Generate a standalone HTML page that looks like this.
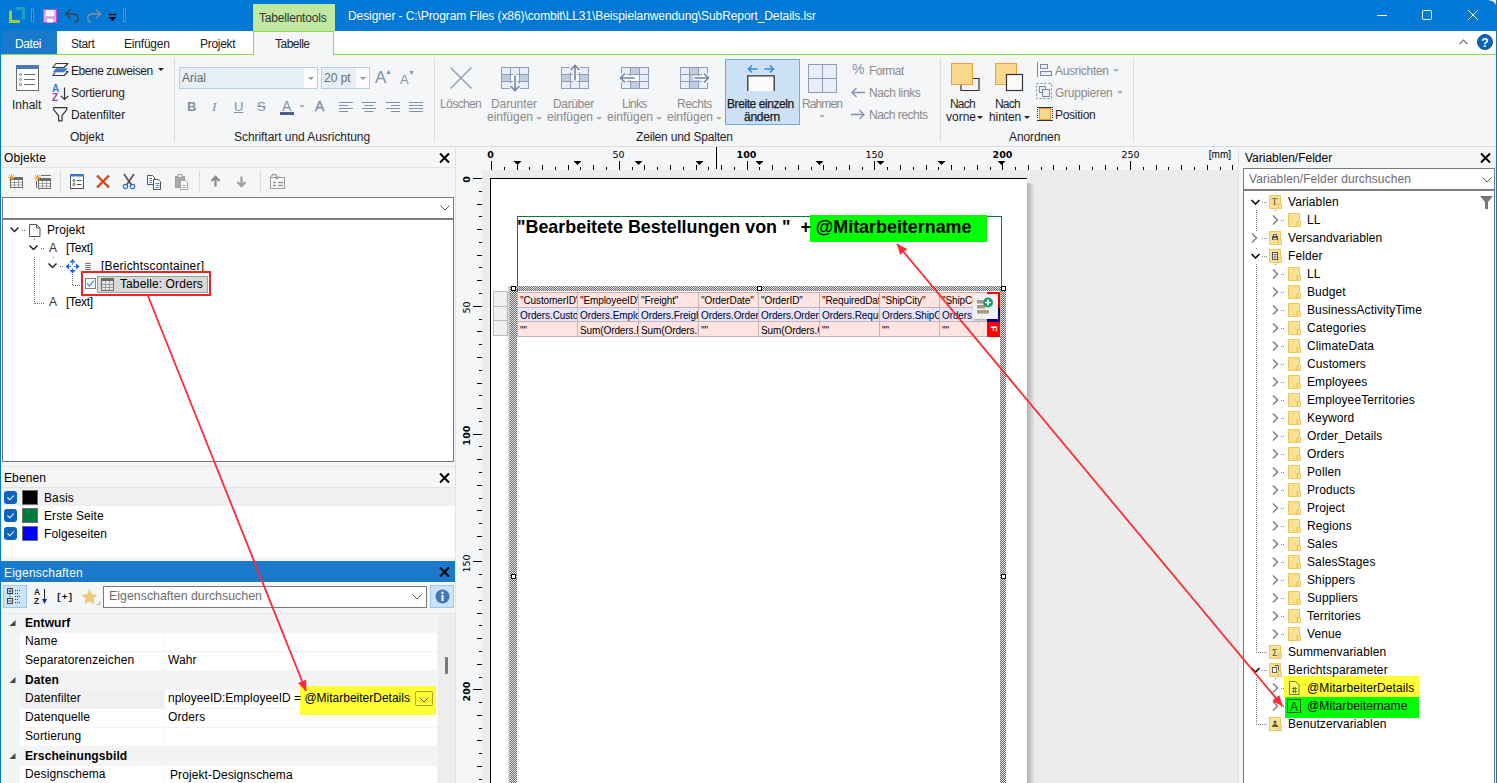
<!DOCTYPE html>
<html lang="de">
<head>
<meta charset="utf-8">
<title>Designer</title>
<style>
*{box-sizing:border-box;margin:0;padding:0}
html,body{width:1497px;height:783px;overflow:hidden;background:#f5f6f7}
body{position:relative;font-family:"Liberation Sans",sans-serif;font-size:12px;color:#000}
.abs,.abs>*{position:absolute}
.t{position:absolute;white-space:nowrap;line-height:1}
.ui{font-family:"Liberation Sans",sans-serif;font-size:12px;color:#1e1e1e}
.dis{color:#8a8a8a}
svg{position:absolute;overflow:visible}
/* ---------- title ---------- */
#title{left:0;top:0;width:1497px;height:31px;background:#0078d5}
#tabs{left:0;top:31px;width:1497px;height:24px;background:#fff;border-bottom:1px solid #86dc4e}
#ribbon{left:0;top:55px;width:1497px;height:92px;background:#f5f6f7;border-bottom:1px solid #dadbdc}
.dd{border:3px solid transparent;border-top:3px solid #b0b0b0;border-bottom:none;width:0;height:0}
.ddk{border:3px solid transparent;border-top:3px solid #222;border-bottom:none;width:0;height:0}
.pt{position:absolute;white-space:nowrap;line-height:1;font-size:12px;color:#000;letter-spacing:0.1px}
.hl{position:absolute;height:1px;background:#e2e3e5}
.dotv{position:absolute;width:1px;background-image:linear-gradient(#808080 50%,transparent 50%);background-size:1px 2px}
.doth{position:absolute;height:1px;background-image:linear-gradient(90deg,#808080 50%,transparent 50%);background-size:2px 1px}
.cb{position:absolute;width:13px;height:13px;border-radius:3px;background:#0a64c0}
.sw{position:absolute;width:16px;height:15px;border:1px solid #6e6e6e}
.prow{position:absolute;left:20px;width:417px;height:19px;background:#fff;border-bottom:1px solid #f2f3f5}
.pcat{position:absolute;left:25px;font-weight:bold;font-size:12px;white-space:nowrap;line-height:1;letter-spacing:0.1px}
.cell{position:absolute;border:1px solid #c9b2b2;font-size:10px;line-height:15px;padding-left:2px;padding-top:1px;white-space:nowrap;overflow:hidden;letter-spacing:-0.1px}
.vsep{position:absolute;width:1px;background:#dcdde0}
</style>
</head>
<body>
<!-- TITLE BAR -->
<div id="title" class="abs">
  <svg style="left:0;top:0" width="130" height="31" viewBox="0 0 130 31">
    <path d="M15.5 8.500h8v11" fill="none" stroke="#1fa3c4" stroke-width="3"/>
    <path d="M10.500 10.500v11h9.500" fill="none" stroke="#a9c91d" stroke-width="3"/>
    <rect x="31.500" y="9" width="2" height="13" fill="#0a5fb0" stroke="#5ea6e6" stroke-width="0.8"/>
    <rect x="43.500" y="9.500" width="13" height="13" fill="#e6a6e6" stroke="#c44fc4"/>
    <rect x="46" y="10" width="8" height="6" fill="#f6f6f6"/>
    <rect x="47" y="19" width="6" height="3.500" fill="#fff"/>
    <path d="M74.500 22.500c5-1.500 5.500-8.500-1.500-8.500h-7.500M70.500 9.500l-4.700 4.500l4.700 4.500" fill="none" stroke="#444" stroke-width="1.500"/>
    <path d="M91.500 22.500c-5-1.500-5.500-8.500 1.500-8.500h7.500M96 9.500l4.700 4.500l-4.700 4.500" fill="none" stroke="#8c8f94" stroke-width="1.300"/>
    <path d="M108.500 14.500h8" stroke="#000" stroke-width="1.200"/><path d="M108.500 17h8l-4 4z" fill="#000"/>
    <rect x="123.500" y="9" width="2" height="13" fill="#0a5fb0" stroke="#5ea6e6" stroke-width="0.8"/>
  </svg>
  <svg style="left:1370px;top:0" width="127" height="31" viewBox="0 0 127 31">
    <path d="M7 15.500h10" stroke="#fff" stroke-width="1"/>
    <rect x="52.500" y="10.500" width="9" height="9" rx="1" fill="none" stroke="#fff" stroke-width="1"/>
    <path d="M98 10l10 10M108 10l-10 10" stroke="#fff" stroke-width="1"/>
  </svg>
  <div style="left:253px;top:4px;width:82px;height:27px;background:#c0e8a0"></div>
  <div class="t" style="left:259px;top:12px;font-size:12px;color:#333;letter-spacing:-0.2px">Tabellentools</div>
  <div class="t" style="left:348px;top:10px;font-size:12px;letter-spacing:-0.09px;color:#fff">Designer - C:\Program Files (x86)\combit\LL31\Beispielanwendung\SubReport_Details.lsr</div>
</div>
<!-- TAB ROW -->
<div id="tabs" class="abs">
  <svg style="left:1455px;top:0" width="42" height="24" viewBox="0 0 42 24">
    <path d="M4.500 13l4-4l4 4" fill="none" stroke="#777" stroke-width="1.200"/>
    <circle cx="30" cy="11" r="7.500" fill="#0b63c0" stroke="#1b4f8f" stroke-width="1"/>
    <text x="30" y="15.500" text-anchor="middle" font-family="Liberation Sans, sans-serif" font-weight="bold" font-size="12" fill="#fff">?</text>
  </svg>
  <div style="left:0;top:0;width:57px;height:23px;background:#1979ca"></div>
  <div class="t" style="left:15px;top:6.500px;color:#fff;letter-spacing:-0.4px">Datei</div>
  <div class="t" style="left:71px;top:6.500px;color:#222;letter-spacing:-0.4px">Start</div>
  <div class="t" style="left:124px;top:6.500px;color:#222;letter-spacing:-0.2px">Einfügen</div>
  <div class="t" style="left:200px;top:6.500px;color:#222;letter-spacing:-0.3px">Projekt</div>
  <div style="left:253px;top:0;width:81px;height:24px;background:#f5f6f7;border:1px solid #86dc4e;border-bottom:none"></div>
  <div class="t" style="left:275px;top:6.500px;color:#222;letter-spacing:-0.5px">Tabelle</div>
</div>
<!-- RIBBON -->
<div id="ribbon" class="abs">
  <!-- group: Objekt -->
  <svg style="left:16px;top:10px" width="24" height="27" viewBox="0 0 24 27"><rect x="0.5" y="0.5" width="22" height="25" fill="#fff" stroke="#6b6b6b"/><rect x="0" y="0" width="23" height="4" fill="#4a78b8"/><g stroke="#6b6b6b" stroke-width="1" fill="none"><path d="M8 9.5h11M8 14.5h11M8 19.5h11"/><circle cx="4.5" cy="9.5" r="1"/><circle cx="4.5" cy="14.5" r="1"/><circle cx="4.5" cy="19.5" r="1"/></g></svg>
  <div class="t ui" style="left:12px;top:44px">Inhalt</div>
  <!-- Ebene zuweisen icon -->
  <svg style="left:52px;top:7px" width="17" height="16" viewBox="0 0 17 16"><g fill="none" stroke="#3a3a3a" stroke-width="1.2" stroke-linejoin="round"><path d="M4 1.5h12l-4 4H0.8z"/><path d="M3.2 10.5l-2.4 3h11.2l4-4h-2"/></g><path d="M4 6.2h12l-4 4H0.8z" fill="#3f79c4"/></svg>
  <div class="t ui" style="left:71px;top:10px;letter-spacing:-0.45px">Ebene zuweisen</div>
  <div style="left:158px;top:13px;border:3px solid transparent;border-top:3px solid #222;border-bottom:none;width:0;height:0"></div>
  <!-- Sortierung icon -->
  <div class="t" style="left:52px;top:29px;font-size:10px;font-weight:bold;color:#2f7fd0">A</div>
  <div class="t" style="left:52px;top:37.500px;font-size:10px;font-weight:bold;color:#a040b0">Z</div>
  <svg style="left:60px;top:32px" width="9" height="14" viewBox="0 0 9 14"><path d="M4.5 0.5v12M0.8 8.8l3.7 3.7l3.7-3.7" fill="none" stroke="#333" stroke-width="1.2"/></svg>
  <div class="t ui" style="left:71px;top:32px;letter-spacing:-0.17px">Sortierung</div>
  <!-- Datenfilter icon -->
  <svg style="left:53px;top:52px" width="15" height="15" viewBox="0 0 15 15"><path d="M0.7 0.7h13.1v2L9 8.6v5.3H5.6V8.6L0.7 2.7z" fill="none" stroke="#333" stroke-width="1.2" stroke-linejoin="round"/></svg>
  <div class="t ui" style="left:71px;top:54px;letter-spacing:-0.05px">Datenfilter</div>
  <div class="t ui" style="left:70px;top:76px;letter-spacing:-0.1px">Objekt</div>
  <div class="vsep" style="left:174px;top:3px;height:84px"></div>

  <!-- group: Schriftart -->
  <div style="left:179px;top:12px;width:139px;height:22px;background:#e6eef8;border:1px solid #b9cde6"></div>
  <div style="left:304px;top:13px;width:13px;height:20px;background:#fdfdfd"></div>
  <div class="t ui" style="left:182px;top:17px;color:#6a6a6a">Arial</div>
  <div style="left:308px;top:22px;border:3px solid transparent;border-top:3px solid #9a9a9a;border-bottom:none;width:0;height:0"></div>
  <div style="left:321px;top:12px;width:49px;height:22px;background:#e6eef8;border:1px solid #b9cde6"></div>
  <div style="left:356px;top:13px;width:13px;height:20px;background:#fdfdfd"></div>
  <div class="t ui" style="left:324px;top:17px;color:#6a6a6a">20 pt</div>
  <div style="left:360px;top:22px;border:3px solid transparent;border-top:3px solid #9a9a9a;border-bottom:none;width:0;height:0"></div>
  <div class="t" style="left:375px;top:14px;font-size:17px;color:#8391ad">A</div>
  <div class="t" style="left:385px;top:13px;font-size:7px;color:#8391ad">▲</div>
  <div class="t" style="left:400px;top:18px;font-size:13px;color:#8391ad">A</div>
  <div class="t" style="left:408px;top:14px;font-size:7px;color:#8391ad">▼</div>
  <div class="t" style="left:187px;top:45px;font-size:13px;font-weight:bold;color:#7f8fad">B</div>
  <div class="t" style="left:212px;top:45px;font-size:13.500px;font-style:italic;font-family:'Liberation Serif',serif;color:#7f8fad">I</div>
  <div class="t" style="left:234px;top:45px;font-size:13px;color:#7f8fad;text-decoration:underline">U</div>
  <div class="t" style="left:257px;top:45px;font-size:13px;color:#7f8fad;text-decoration:line-through">S</div>
  <div class="t" style="left:282px;top:44px;font-size:14px;color:#7f8fad">A</div>
  <div style="left:280px;top:57px;width:14px;height:3px;background:#4a5f8f"></div>
  <div style="left:299px;top:50px;border:3px solid transparent;border-top:3px solid #b0b0b0;border-bottom:none;width:0;height:0"></div>
  <div class="t" style="left:315px;top:44px;font-size:14px;color:#7f8fad;-webkit-text-stroke:0.4px #7f8fad">A</div>
  <svg style="left:339px;top:46px" width="86" height="12" viewBox="0 0 86 12"><g stroke="#7f8fad" stroke-width="1" fill="none"><path d="M0 1.5h14M0 4.5h9M0 7.5h14M0 10.5h9"/><path d="M23 1.5h14M25.5 4.5h9M23 7.5h14M25.5 10.5h9"/><path d="M47 1.5h14M52 4.5h9M47 7.5h14M52 10.5h9"/><path d="M70 1.5h14M70 4.5h14M70 7.5h14M70 10.5h14"/></g></svg>
  <div class="t ui" style="left:234px;top:76px;letter-spacing:-0.05px">Schriftart und Ausrichtung</div>
  <div class="vsep" style="left:434px;top:3px;height:84px"></div>

  <!-- group: Zeilen und Spalten -->
  <svg style="left:450px;top:12px" width="22" height="22" viewBox="0 0 22 22"><path d="M0.5 0.5l21 21M21.5 0.5l-21 21" stroke="#97a3bb" stroke-width="1.6" fill="none"/></svg>
  <div class="t ui dis" style="left:440px;top:43px;letter-spacing:-0.6px">Löschen</div>

  <svg style="left:501px;top:12px" width="28" height="26" viewBox="0 0 28 26"><rect x="0.5" y="0.5" width="27" height="21" fill="#e8effa" stroke="#8d9cba"/><rect x="1" y="8" width="8" height="6" fill="#c0cce2"/><rect x="19" y="8" width="8" height="6" fill="#c0cce2"/><path d="M9.5 0.5v21M18.5 0.5v21M0.5 7.5h27M0.5 14.5h27" stroke="#8d9cba" fill="none"/><rect x="10" y="8" width="8" height="6" fill="#fff"/><path d="M14 9v14M9.5 19l4.500 4.500l4.500-4.500" stroke="#f5f6f7" stroke-width="4.500" fill="none" stroke-linecap="round"/><path d="M14 8.500v15M9.5 19l4.500 4.500l4.500-4.500" stroke="#7485a8" stroke-width="1.600" fill="none"/></svg>
  <div class="t ui dis" style="left:491px;top:43px;letter-spacing:-0.1px">Darunter</div>
  <div class="t ui dis" style="left:487px;top:56px">einfügen</div>
  <div class="dd" style="left:536px;top:62px"></div>

  <svg style="left:561px;top:9px" width="28" height="25" viewBox="0 0 28 25"><rect x="0.5" y="3.5" width="27" height="21" fill="#e8effa" stroke="#8d9cba"/><rect x="1" y="11" width="8" height="6" fill="#c0cce2"/><rect x="19" y="11" width="8" height="6" fill="#c0cce2"/><path d="M9.5 3.5v21M18.5 3.5v21M0.5 10.5h27M0.5 17.5h27" stroke="#8d9cba" fill="none"/><rect x="10" y="11" width="8" height="6" fill="#fff"/><path d="M14 16v-14M9.5 6l4.500-4.500l4.500 4.500" stroke="#f5f6f7" stroke-width="4.500" fill="none" stroke-linecap="round"/><path d="M14 16.500v-15M9.5 6l4.500-4.500l4.500 4.500" stroke="#7485a8" stroke-width="1.600" fill="none"/></svg>
  <div class="t ui dis" style="left:553px;top:43px;letter-spacing:-0.35px">Darüber</div>
  <div class="t ui dis" style="left:547px;top:56px">einfügen</div>
  <div class="dd" style="left:596px;top:62px"></div>

  <svg style="left:619px;top:12px" width="31" height="22" viewBox="0 0 31 22"><rect x="2.5" y="0.5" width="27" height="21" fill="#e8effa" stroke="#8d9cba"/><rect x="12" y="1" width="8" height="6" fill="#c0cce2"/><rect x="12" y="15" width="8" height="6" fill="#c0cce2"/><path d="M11.5 0.5v21M20.5 0.5v21M2.5 7.5h27M2.5 14.5h27" stroke="#8d9cba" fill="none"/><rect x="12" y="8" width="8" height="6" fill="#fff"/><path d="M15 11H2M6 6.500L1.500 11L6 15.500" stroke="#f5f6f7" stroke-width="4.500" fill="none" stroke-linecap="round"/><path d="M15.500 11H1.500M6 6.500L1.500 11L6 15.500" stroke="#7485a8" stroke-width="1.600" fill="none"/></svg>
  <div class="t ui dis" style="left:622px;top:43px;letter-spacing:-0.7px">Links</div>
  <div class="t ui dis" style="left:607px;top:56px">einfügen</div>
  <div class="dd" style="left:656px;top:62px"></div>

  <svg style="left:680px;top:12px" width="31" height="22" viewBox="0 0 31 22"><rect x="0.5" y="0.5" width="27" height="21" fill="#e8effa" stroke="#8d9cba"/><rect x="10" y="1" width="8" height="6" fill="#c0cce2"/><rect x="10" y="15" width="8" height="6" fill="#c0cce2"/><path d="M9.5 0.5v21M18.5 0.5v21M0.5 7.5h27M0.5 14.5h27" stroke="#8d9cba" fill="none"/><rect x="10" y="8" width="8" height="6" fill="#c0cce2"/><path d="M15 11h13M24 6.500l4.500 4.500l-4.500 4.500" stroke="#f5f6f7" stroke-width="4.500" fill="none" stroke-linecap="round"/><path d="M14.500 11h14M24 6.500l4.500 4.500l-4.500 4.500" stroke="#7485a8" stroke-width="1.600" fill="none"/></svg>
  <div class="t ui dis" style="left:677px;top:43px;letter-spacing:-0.4px">Rechts</div>
  <div class="t ui dis" style="left:667px;top:56px">einfügen</div>
  <div class="dd" style="left:716px;top:62px"></div>

  <div style="left:725px;top:4px;width:75px;height:66px;background:#cce0f6;border:1px solid #6da9e6"></div>
  <svg style="left:747px;top:9px" width="28" height="28" viewBox="0 0 28 28"><path d="M0.8 27V11.8h26.4V27" fill="#fbfbfb" stroke="#333" stroke-width="1.3"/><path d="M10.5 5H1.5M5 1.5L1.5 5L5 8.5M17.5 5h9M23 1.5L26.5 5L23 8.5" stroke="#2f8ad8" stroke-width="1.4" fill="none"/></svg>
  <div class="t ui" style="left:727px;top:43px;color:#1a1a1a;-webkit-text-stroke:0.25px #1a1a1a;letter-spacing:-0.42px">Breite einzeln</div>
  <div class="t ui" style="left:744px;top:56px;color:#1a1a1a;-webkit-text-stroke:0.25px #1a1a1a;letter-spacing:-0.25px">ändern</div>

  <svg style="left:808px;top:9px" width="29" height="29" viewBox="0 0 29 29"><rect x="0.5" y="0.5" width="28" height="28" fill="#e8effa" stroke="#8d9cba"/><path d="M14.5 0.5v28M0.5 14.5h28" stroke="#8d9cba" fill="none"/></svg>
  <div class="t ui dis" style="left:802px;top:43px;letter-spacing:-0.9px">Rahmen</div>
  <div class="dd" style="left:819px;top:60px"></div>

  <div class="t dis" style="left:852px;top:7px;font-size:14px;color:#7f8fad">%</div>
  <div class="t ui dis" style="left:869px;top:9.5px;letter-spacing:-0.55px">Format</div>
  <svg style="left:851px;top:32px" width="14" height="11" viewBox="0 0 14 11"><path d="M14 5.5H1M5.5 1L1 5.5L5.5 10" stroke="#8492ae" stroke-width="1.3" fill="none"/></svg>
  <div class="t ui dis" style="left:869px;top:31.5px;letter-spacing:-0.4px">Nach links</div>
  <svg style="left:851px;top:54px" width="14" height="11" viewBox="0 0 14 11"><path d="M0 5.5h13M8.5 1L13 5.5L8.5 10" stroke="#8492ae" stroke-width="1.3" fill="none"/></svg>
  <div class="t ui dis" style="left:869px;top:53.5px;letter-spacing:-0.5px">Nach rechts</div>
  <div class="t ui" style="left:636px;top:76px;letter-spacing:-0.18px">Zeilen und Spalten</div>
  <div class="vsep" style="left:940px;top:3px;height:84px"></div>

  <!-- group: Anordnen -->
  <svg style="left:951px;top:8px" width="29" height="29" viewBox="0 0 29 29"><path d="M22 15.5h6v12H10v-6" fill="none" stroke="#333" stroke-width="1.2"/><rect x="0.5" y="0.5" width="21" height="21" fill="#fad88c" stroke="#f59b3a"/></svg>
  <div class="t ui" style="left:950px;top:43px;letter-spacing:-0.8px">Nach</div>
  <div class="t ui" style="left:946px;top:56px">vorne</div>
  <div class="ddk" style="left:977px;top:61px"></div>
  <svg style="left:995px;top:8px" width="29" height="29" viewBox="0 0 29 29"><rect x="0.5" y="0.5" width="21" height="21" fill="#fad88c" stroke="#f59b3a"/><rect x="11.5" y="11.5" width="16" height="16" fill="#fbfbfb" stroke="#333" stroke-width="1.2"/></svg>
  <div class="t ui" style="left:995px;top:43px;letter-spacing:-0.8px">Nach</div>
  <div class="t ui" style="left:989px;top:56px;letter-spacing:-0.1px">hinten</div>
  <div class="ddk" style="left:1024px;top:61px"></div>

  <svg style="left:1037px;top:7px" width="15" height="15" viewBox="0 0 15 15"><path d="M0.5 0v15" stroke="#7a89a8" fill="none"/><rect x="3.5" y="2.5" width="7" height="4" fill="#e8effa" stroke="#7a89a8"/><rect x="3.5" y="9.500" width="11" height="4" fill="#e8effa" stroke="#7a89a8"/></svg>
  <div class="t ui dis" style="left:1055px;top:10px;letter-spacing:-0.3px">Ausrichten</div>
  <div class="dd" style="left:1113px;top:14px"></div>
  <svg style="left:1036px;top:28px" width="17" height="17" viewBox="0 0 17 17"><rect x="0.5" y="0.5" width="15" height="15" fill="none" stroke="#7a89a8" stroke-dasharray="2 2"/><rect x="3.5" y="3.5" width="6" height="6" fill="#e8effa" stroke="#7a89a8"/><rect x="6.5" y="6.5" width="7" height="7" fill="#e8effa" stroke="#7a89a8"/></svg>
  <div class="t ui dis" style="left:1055px;top:32px;letter-spacing:-0.25px">Gruppieren</div>
  <div class="dd" style="left:1117px;top:36px"></div>
  <svg style="left:1037px;top:52px" width="16" height="14" viewBox="0 0 16 14"><rect x="2.5" y="1.5" width="11" height="11" fill="#fad88c" stroke="#e8973a"/><path d="M0 0.5h16M0 13.5h16" stroke="#333"/><path d="M0.5 2v10M15.500 2v10" stroke="#333" stroke-dasharray="1 1"/></svg>
  <div class="t ui" style="left:1055px;top:54px;letter-spacing:-0.28px">Position</div>
  <div class="t ui" style="left:1009px;top:76px;letter-spacing:-0.1px">Anordnen</div>
  <div class="vsep" style="left:1133px;top:3px;height:84px"></div>
</div>
<!-- LEFT PANEL -->
<div id="left" class="abs" style="left:0;top:147px;width:460px;height:636px">
  <div class="pt" style="left:4px;top:5px">Objekte</div>
  <svg style="left:439px;top:6px" width="11" height="10" viewBox="0 0 11 10"><path d="M1 0.500l9 9M10 0.500l-9 9" stroke="#000" stroke-width="1.900" fill="none"/></svg>
  <div class="hl" style="left:2px;top:20px;width:453px"></div>
  <!-- toolbar -->
  <svg style="left:6px;top:26px" width="280" height="18" viewBox="0 0 280 18">
    <g id="tbl1"><rect x="4.500" y="4.500" width="12" height="10" fill="#fff" stroke="#6b6b6b"/><rect x="4" y="4" width="13" height="3" fill="#6b6b6b"/><path d="M8.500 7v7.500M12.500 7v7.500M4.500 9.500h12M4.500 12h12" stroke="#8a8a8a" stroke-width="0.800" fill="none"/><path d="M5.500 1v7M2 4.500h7M3 2l5 5M8 2l-5 5" stroke="#f0a030" stroke-width="0.900"/></g>
    <g transform="translate(26,0)"><rect x="6.500" y="5.500" width="12" height="10" fill="#fff" stroke="#6b6b6b"/><rect x="6" y="5" width="13" height="3" fill="#6b6b6b"/><path d="M10.500 8v7.500M14.500 8v7.500M6.500 10.500h12M6.500 13h12" stroke="#8a8a8a" stroke-width="0.800" fill="none"/><path d="M4.500 8v7M9 2.500h10" stroke="#6b6b6b"/><path d="M5.500 1v7M2 4.500h7M3 2l5 5M8 2l-5 5" stroke="#f0a030" stroke-width="0.900"/></g>
    <path d="M54.500 1v22" stroke="#dcdde0" transform="translate(0,-3)"/>
    <g transform="translate(64,1)"><rect x="0.500" y="0.500" width="13" height="14" fill="#fff" stroke="#555"/><rect x="0" y="0" width="14" height="2.500" fill="#3f79c4"/><circle cx="4" cy="6.500" r="1.100" fill="none" stroke="#555" stroke-width="0.900"/><circle cx="4" cy="10.500" r="1.100" fill="none" stroke="#555" stroke-width="0.900"/><path d="M7 6.500h4.500M7 10.500h4.500" stroke="#555"/></g>
    <path d="M91 2.500l12 12M103 2.500l-12 12" stroke="#d8401c" stroke-width="2.300" fill="none"/>
    <g transform="translate(116,0)"><path d="M2 1l7.500 11M12 1l-7.500 11" stroke="#555" stroke-width="1.700" fill="none"/><circle cx="3.500" cy="13.500" r="2.200" fill="none" stroke="#2f6fc0" stroke-width="1.200"/><circle cx="10.500" cy="13.500" r="2.200" fill="none" stroke="#2f6fc0" stroke-width="1.200"/></g>
    <g transform="translate(141,2)"><path d="M0.500 0.500h5l2 2v7h-7z" fill="#fff" stroke="#555"/><path d="M6.500 4.500h5l2 2v8h-7z" fill="#fff" stroke="#555"/><path d="M2 3.500h3M2 5.500h3M2 7.500h3" stroke="#3f79c4" stroke-width="0.900"/><path d="M8.500 8.500h4M8.500 10.500h4M8.500 12.500h4" stroke="#3f79c4" stroke-width="0.900"/></g>
    <g transform="translate(169,1)"><rect x="0.500" y="2.500" width="9" height="11" fill="#a9a9a9" stroke="#a0a0a0"/><rect x="3" y="0.500" width="4" height="3" fill="#f5f6f7" stroke="#a0a0a0"/><path d="M5.500 6.500h5l2 2v7h-7z" fill="#fafafa" stroke="#a0a0a0"/><path d="M7.500 11.500h3M7.500 13.500h3" stroke="#a0a0a0"/></g>
    <path d="M193.500 1v22" stroke="#dcdde0" transform="translate(0,-3)"/>
    <path d="M209.500 13.500v-9M205.500 8l4-4l4 4" stroke="#8c8c8c" stroke-width="2.300" fill="none"/>
    <path d="M235.500 3.500v9M231.500 9l4 4l4-4" stroke="#a0a0a0" stroke-width="2.300" fill="none"/>
    <path d="M254.500 1v22" stroke="#dcdde0" transform="translate(0,-3)"/>
    <g transform="translate(264,1)"><rect x="0.500" y="3.500" width="14" height="11" fill="#fafafa" stroke="#9a9a9a"/><path d="M3 8.500h3M3 11.500h3M8 8.500h5M8 11.500h5" stroke="#9a9a9a" stroke-width="1.400"/><path d="M1 2.500c2-3 6-3 6 1.500M4.500 3l2.500 2l2-2.500" stroke="#9a9a9a" stroke-width="1.200" fill="none"/></g>
  </svg>
  <!-- combobox -->
  <div style="left:2px;top:50px;width:452px;height:22px;background:#fff;border:1px solid #7a7a7a"></div>
  <svg style="left:440px;top:58px" width="10" height="6" viewBox="0 0 10 6"><path d="M0.500 0.500l4.500 4.500l4.500-4.500" fill="none" stroke="#555" stroke-width="1"/></svg>
  <!-- tree -->
  <div style="left:2px;top:72px;width:452px;height:243px;background:#fff;border:1px solid #6d7580;border-top:1px solid #7f848c"></div>
  <svg style="left:0;top:72px" width="230" height="100" viewBox="0 0 230 100">
    <g fill="none" stroke="#222" stroke-width="1.500"><path d="M10.500 8.500l4 4l4-4"/><path d="M29.500 26.500l4 4l4-4"/><path d="M48.500 44.500l4 4l4-4"/></g>
    <path d="M29.5 5.5h7l3.5 3.5v8.5h-10.5z" fill="#fff" stroke="#555"/><path d="M36.500 5.500v3.500h3.500" fill="none" stroke="#555"/>
    <g stroke="#707070" stroke-dasharray="1 1" fill="none"><path d="M22 11.5h4M34.5 20v1M41 29.5h4M34.5 38v47M35 84.5h10M53.5 38v1M60 47.5h4M72.5 55v12M73 66.5h8"/></g>
    <g fill="#1f5ff0" stroke="none"><path d="M72.500 40l3 3.500h-6zM72.500 54.500l3-3.500h-6zM65.500 47.500l3.500-3v6zM79.500 47.500l-3.500-3v6z"/><rect x="72" y="44" width="1" height="1.500"/><rect x="72" y="49.500" width="1" height="1.500"/><rect x="69.500" y="47" width="1.500" height="1"/><rect x="74" y="47" width="1.500" height="1"/></g>
    <path d="M85 44.500h6M85 46.500h6M85 48.500h6M85 50.500h6" stroke="#555" stroke-width="0.800"/>
  </svg>
  <div class="pt" style="left:47px;top:77px">Projekt</div>
  <div class="pt" style="left:49px;top:95px;color:#333">A</div>
  <div class="pt" style="left:66px;top:95px;letter-spacing:-0.3px">[Text]</div>
  <div class="pt" style="left:101px;top:113px;letter-spacing:0.2px">[Berichtscontainer]</div>
  <div style="left:97px;top:129px;width:111px;height:17px;background:#d9d9d9;border:1px solid #a0a0a0"></div>
  <div style="left:85px;top:131px;width:11px;height:11px;background:#fff;border:1px solid #808080"></div>
  <svg style="left:86px;top:132px" width="9" height="9" viewBox="0 0 9 9"><path d="M1 4.500l2.500 2.500l4.500-5.500" fill="none" stroke="#4a90d9" stroke-width="1.300"/></svg>
  <svg style="left:101px;top:131px" width="13" height="13" viewBox="0 0 13 13"><rect x="0.500" y="0.500" width="12" height="12" fill="#e8e8e8" stroke="#6b6b6b"/><rect x="0" y="0" width="13" height="3" fill="#6b6b6b"/><path d="M4.500 3v9.500M8.500 3v9.500M0.500 6.500h12M0.500 9.500h12" stroke="#8a8a8a" stroke-width="0.800"/></svg>
  <div class="pt" style="left:120px;top:131px">Tabelle: Orders</div>
  <div style="left:81px;top:124px;width:130px;height:25px;border:2px solid #f52222"></div>
  <div class="pt" style="left:49px;top:149px;color:#333">A</div>
  <div class="pt" style="left:66px;top:149px;letter-spacing:-0.3px">[Text]</div>

  <!-- Ebenen -->
  <div class="hl" style="left:2px;top:319px;width:453px"></div>
  <div class="pt" style="left:4px;top:325px">Ebenen</div>
  <svg style="left:439px;top:326px" width="11" height="10" viewBox="0 0 11 10"><path d="M1 0.500l9 9M10 0.500l-9 9" stroke="#000" stroke-width="1.900" fill="none"/></svg>
  <div class="hl" style="left:2px;top:340px;width:453px"></div>
  <div style="left:2px;top:341px;width:453px;height:69px;background:#fff"></div>
  <div style="left:2px;top:341px;width:453px;height:18px;background:#f0f0f0"></div>
  <div class="cb" style="left:4px;top:344px"></div><div class="cb" style="left:4px;top:362px"></div><div class="cb" style="left:4px;top:380px"></div>
  <svg style="left:4px;top:344px" width="13" height="50" viewBox="0 0 13 50"><g fill="none" stroke="#fff" stroke-width="1.100"><path d="M3.500 6.500l2.300 2.300l4-4.300"/><path d="M3.500 24.500l2.300 2.300l4-4.300"/><path d="M3.500 42.500l2.300 2.300l4-4.300"/></g></svg>
  <div class="sw" style="left:22px;top:343px;background:#000"></div>
  <div class="sw" style="left:22px;top:361px;background:#007a3d"></div>
  <div class="sw" style="left:22px;top:379px;background:#0000ff"></div>
  <div class="pt" style="left:44px;top:345px">Basis</div>
  <div class="pt" style="left:44px;top:363px">Erste Seite</div>
  <div class="pt" style="left:44px;top:381px">Folgeseiten</div>

  <!-- Eigenschaften -->
  <div style="left:1px;top:414px;width:454px;height:21px;background:#1979ca"></div>
  <div class="pt" style="left:4px;top:420px;color:#fff;letter-spacing:0.22px">Eigenschaften</div>
  <svg style="left:439px;top:420px" width="11" height="10" viewBox="0 0 11 10"><path d="M1 0.500l9 9M10 0.500l-9 9" stroke="#000" stroke-width="1.900" fill="none"/></svg>
  <div style="left:3px;top:438px;width:24px;height:23px;background:#cce4f7;border:1px solid #99c9ef"></div>
  <svg style="left:7px;top:441px" width="100" height="17" viewBox="0 0 100 17">
    <g stroke="#444" fill="none"><rect x="0.500" y="0.500" width="5" height="5"/><rect x="0.500" y="10.500" width="5" height="5"/><path d="M1.500 3h3M3 1.500v3M1.500 13h3" stroke-width="0.900"/><path d="M3 6v4M8 2.500h6M8 5.500h4M8 8.500h6M8 11.500h4M8 14.500h6" stroke-dasharray="1 1"/></g>
    <text x="27" y="7" font-family="Liberation Sans, sans-serif" font-size="8.500" font-weight="bold" fill="#222">A</text>
    <text x="27" y="16" font-family="Liberation Sans, sans-serif" font-size="8.500" font-weight="bold" fill="#222">Z</text>
    <path d="M37.500 1v13" stroke="#222"/><path d="M35 11h5l-2.500 5z" fill="#1a2a9a"/>
    <text x="49" y="12" font-family="Liberation Mono, monospace" font-size="9.500" font-weight="bold" fill="#111">[+]</text>
    <path d="M82.500 1l2.400 5.200l5.600 0.600l-4.200 3.800l1.200 5.600l-5-2.900l-5 2.900l1.200-5.600l-4.200-3.800l5.600-0.600z" fill="#f2c977"/>
    <path d="M90 16.500h3v-3" fill="none" stroke="#aaa"/>
  </svg>
  <div style="left:103px;top:439px;width:324px;height:22px;background:#fff;border:1px solid #7a7a7a"></div>
  <div class="pt" style="left:109px;top:443px;color:#6d6d6d;font-size:12.400px;letter-spacing:0">Eigenschaften durchsuchen</div>
  <svg style="left:412px;top:447px" width="10" height="6" viewBox="0 0 10 6"><path d="M0.500 0.500l4.500 4.500l4.500-4.500" fill="none" stroke="#555" stroke-width="1"/></svg>
  <div style="left:430px;top:438px;width:24px;height:23px;background:#cce4f7;border:1px solid #99c9ef"></div>
  <svg style="left:435px;top:442px" width="15" height="15" viewBox="0 0 15 15"><circle cx="7.500" cy="7.500" r="7" fill="#3f78b8"/><rect x="6.500" y="6" width="2" height="6" fill="#fff"/><circle cx="7.500" cy="3.800" r="1.200" fill="#fff"/></svg>
  <!-- property grid -->
  <div class="hl" style="left:2px;top:466px;width:453px;background:#e6e7e9"></div>
  <div style="left:2px;top:467px;width:453px;height:170px;background:#f3f4f6"></div>
  <div style="left:438px;top:467px;width:17px;height:170px;background:#ededed"></div>
  <div class="prow" style="top:486px"></div>
  <div class="prow" style="top:505px"></div>
  <div class="prow" style="top:543px"></div>
  <div class="prow" style="top:562px"></div>
  <div class="prow" style="top:581px"></div>
  <div class="prow" style="top:619px"></div>
  <div style="left:20px;top:543px;width:144px;height:18px;background:#f0f0f0"></div>
  <div style="left:164px;top:486px;width:1px;height:38px;background:#f2f3f5"></div>
  <div style="left:164px;top:543px;width:1px;height:57px;background:#f2f3f5"></div>
  <div style="left:164px;top:619px;width:1px;height:19px;background:#f2f3f5"></div>
  <svg style="left:8px;top:466px" width="10" height="160" viewBox="0 0 10 160"><g fill="#444"><path d="M7.500 7v6h-6z"/><path d="M7.500 64v6h-6z"/><path d="M7.500 140v6h-6z"/></g></svg>
  <div class="pcat" style="top:470px">Entwurf</div>
  <div class="pt" style="left:25px;top:488px">Name</div>
  <div class="pt" style="left:25px;top:507px">Separatorenzeichen</div>
  <div class="pt" style="left:168px;top:507px">Wahr</div>
  <div class="pcat" style="top:527px">Daten</div>
  <div class="pt" style="left:25px;top:545px">Datenfilter</div>
  <div style="left:300px;top:539px;width:136px;height:29px;background:#ffff33"></div>
  <div class="pt" style="left:168px;top:545px;letter-spacing:0">nployeeID:EmployeeID = @MitarbeiterDetails</div>
  <div style="left:415px;top:544px;width:18px;height:15px;border:1px solid #b0a030;border-radius:2px"></div>
  <svg style="left:419px;top:550px" width="10" height="6" viewBox="0 0 10 6"><path d="M0.500 0.500l4.500 4.500l4.500-4.500" fill="none" stroke="#555" stroke-width="1"/></svg>
  <div class="pt" style="left:25px;top:564px">Datenquelle</div>
  <div class="pt" style="left:168px;top:564px">Orders</div>
  <div class="pt" style="left:25px;top:583px">Sortierung</div>
  <div class="pcat" style="top:603px">Erscheinungsbild</div>
  <div class="pt" style="left:25px;top:621px">Designschema</div>
  <div class="pt" style="left:170px;top:622px">Projekt-Designschema</div>
  <div style="left:445px;top:510px;width:3px;height:17px;background:#7a7a7a;border-radius:1px"></div>
  <!-- splitter lines -->
  <div style="left:455px;top:1px;width:1px;height:635px;background:#e2e3e5"></div>
</div>
<!-- CENTER -->
<div id="center" class="abs" style="left:459px;top:147px;width:779px;height:636px;background:#ececec;overflow:hidden">
<div style="left:0;top:0;width:779px;height:23px;background:#f5f6f7"></div>
<div style="left:0;top:0;width:23px;height:636px;background:#f5f6f7"></div>
<div style="left:-1px;top:0;width:1px;height:636px;background:#e2e3e5"></div>
<svg style="left:0;top:0" width="779" height="636" viewBox="0 0 779 636"><path d="M32.5 14v9M45.5 20v3M58.5 18v5M70.5 20v3M83.5 18v5M96.5 20v3M109.5 18v5M121.5 20v3M134.5 18v5M147.5 20v3M160.5 14v9M173.5 20v3M185.5 18v5M198.5 20v3M211.5 18v5M224.5 20v3M237.5 18v5M249.5 20v3M262.5 18v5M275.5 20v3M288.5 14v9M300.5 20v3M313.5 18v5M326.5 20v3M339.5 18v5M352.5 20v3M364.5 18v5M377.5 20v3M390.5 18v5M403.5 20v3M415.5 14v9M428.5 20v3M441.5 18v5M454.5 20v3M467.5 18v5M479.5 20v3M492.5 18v5M505.5 20v3M518.5 18v5M531.5 20v3M543.5 14v9M556.5 20v3M569.5 18v5M582.5 20v3M594.5 18v5M607.5 20v3M620.5 18v5M633.5 20v3M646.5 18v5M658.5 20v3M671.5 14v9M684.5 20v3M697.5 18v5M709.5 20v3M722.5 18v5M735.5 20v3M748.5 18v5M761.5 20v3M773.5 18v5" stroke="#000" stroke-width="1" fill="none"/><path d="M14 31.5h9M20 44.5h3M18 57.5h5M20 69.5h3M18 82.5h5M20 95.5h3M18 108.5h5M20 120.5h3M18 133.5h5M20 146.5h3M14 159.5h9M20 172.5h3M18 184.5h5M20 197.5h3M18 210.5h5M20 223.5h3M18 236.5h5M20 248.5h3M18 261.5h5M20 274.5h3M14 287.5h9M20 299.5h3M18 312.5h5M20 325.5h3M18 338.5h5M20 351.5h3M18 363.5h5M20 376.5h3M18 389.5h5M20 402.5h3M14 414.5h9M20 427.5h3M18 440.5h5M20 453.5h3M18 466.5h5M20 478.5h3M18 491.5h5M20 504.5h3M18 517.5h5M20 530.5h3M14 542.5h9M20 555.5h3M18 568.5h5M20 581.5h3M18 593.5h5M20 606.5h3M18 619.5h5M20 632.5h3" stroke="#000" stroke-width="1" fill="none"/><text x="31.5" y="11" text-anchor="middle" font-family="DejaVu Sans, Liberation Sans, sans-serif" font-size="9.500" font-weight="bold" fill="#000">0</text><text x="159.5" y="11" text-anchor="middle" font-family="DejaVu Sans, Liberation Sans, sans-serif" font-size="9.500" fill="#000">50</text><text x="287.5" y="11" text-anchor="middle" font-family="DejaVu Sans, Liberation Sans, sans-serif" font-size="9.500" font-weight="bold" fill="#000">100</text><text x="415.5" y="11" text-anchor="middle" font-family="DejaVu Sans, Liberation Sans, sans-serif" font-size="9.500" fill="#000">150</text><text x="543.5" y="11" text-anchor="middle" font-family="DejaVu Sans, Liberation Sans, sans-serif" font-size="9.500" font-weight="bold" fill="#000">200</text><text x="671.5" y="11" text-anchor="middle" font-family="DejaVu Sans, Liberation Sans, sans-serif" font-size="9.500" fill="#000">250</text><text transform="translate(11,32.5) rotate(-90)" x="0" y="0" text-anchor="middle" font-family="DejaVu Sans, Liberation Sans, sans-serif" font-size="9.500" font-weight="bold" fill="#000">0</text><text transform="translate(11,160.5) rotate(-90)" x="0" y="0" text-anchor="middle" font-family="DejaVu Sans, Liberation Sans, sans-serif" font-size="9.500" fill="#000">50</text><text transform="translate(11,288.5) rotate(-90)" x="0" y="0" text-anchor="middle" font-family="DejaVu Sans, Liberation Sans, sans-serif" font-size="9.500" font-weight="bold" fill="#000">100</text><text transform="translate(11,416.5) rotate(-90)" x="0" y="0" text-anchor="middle" font-family="DejaVu Sans, Liberation Sans, sans-serif" font-size="9.500" fill="#000">150</text><text transform="translate(11,544.5) rotate(-90)" x="0" y="0" text-anchor="middle" font-family="DejaVu Sans, Liberation Sans, sans-serif" font-size="9.500" font-weight="bold" fill="#000">200</text><text x="772" y="11" text-anchor="end" font-family="Liberation Sans, sans-serif" font-size="10" fill="#000">[mm]</text><path d="M54.5 14h8l-4 4zM114.5 14h8l-4 4zM175.5 14h8l-4 4zM236.5 14h8l-4 4zM296.5 14h8l-4 4zM356.5 14h8l-4 4zM417.5 14h8l-4 4zM478.5 14h8l-4 4zM538.5 14h8l-4 4z" fill="#000"/><path d="M257.500 0v22" stroke="#000" stroke-width="1"/></svg>
<div style="left:568px;top:36px;width:8px;height:603px;background:linear-gradient(90deg,#b4b4b4,#c6c6c6 40%,#ececec);border-top-right-radius:6px"></div>
<div style="left:31px;top:31px;width:537px;height:620px;background:#fff;border-left:1px solid #000;border-top:1px solid #000"></div>
<div style="left:58px;top:69px;width:485px;height:73px;border:1px solid #0a7a40"></div>
<div style="left:351px;top:68px;width:177px;height:27px;background:#00ff00"></div>
<div class="t" style="left:58px;top:72px;font-size:17.900px;font-weight:bold;color:#000;white-space:pre">"Bearbeitete Bestellungen von "  + @Mitarbeitername</div>
<div style="left:49px;top:139px;width:3px;height:497px;background:linear-gradient(90deg,#e0e0e0,#9a9a9a)"></div>
<div style="left:51px;top:139px;width:496px;height:5px;background-image:conic-gradient(#6a6a6a 25%,#e4e4e4 0 50%,#6a6a6a 0 75%,#e4e4e4 0);background-size:2px 2px"></div>
<div style="left:51px;top:139px;width:7px;height:497px;background-image:conic-gradient(#6a6a6a 25%,#e4e4e4 0 50%,#6a6a6a 0 75%,#e4e4e4 0);background-size:2px 2px"></div>
<div style="left:541px;top:139px;width:6px;height:497px;background-image:conic-gradient(#6a6a6a 25%,#e4e4e4 0 50%,#6a6a6a 0 75%,#e4e4e4 0);background-size:2px 2px"></div>
<div style="left:58px;top:142px;width:1px;height:3px;background:#0a7a40"></div>
<div class="cell" style="left:58px;top:145px;width:61px;height:16px;padding-top:0px;background:#ffe4e1;color:#000">&quot;CustomerID&quot;</div>
<div class="cell" style="left:118px;top:145px;width:62px;height:16px;padding-top:0px;background:#ffe4e1;color:#000">&quot;EmployeeID&quot;</div>
<div class="cell" style="left:179px;top:145px;width:61px;height:16px;padding-top:0px;background:#ffe4e1;color:#000">&quot;Freight&quot;</div>
<div class="cell" style="left:239px;top:145px;width:61px;height:16px;padding-top:0px;background:#ffe4e1;color:#000">&quot;OrderDate&quot;</div>
<div class="cell" style="left:299px;top:145px;width:62px;height:16px;padding-top:0px;background:#ffe4e1;color:#000">&quot;OrderID&quot;</div>
<div class="cell" style="left:360px;top:145px;width:61px;height:16px;padding-top:0px;background:#ffe4e1;color:#000">&quot;RequiredDate&quot;</div>
<div class="cell" style="left:420px;top:145px;width:61px;height:16px;padding-top:0px;background:#ffe4e1;color:#000">&quot;ShipCity&quot;</div>
<div class="cell" style="left:480px;top:145px;width:62px;height:16px;padding-top:0px;background:#ffe4e1;color:#000">&quot;ShipCountry&quot;</div>
<div class="cell" style="left:58px;top:160px;width:61px;height:15px;padding-top:0px;background:#e6e6fa;color:#000030">Orders.CustomerID</div>
<div class="cell" style="left:118px;top:160px;width:62px;height:15px;padding-top:0px;background:#e6e6fa;color:#000030">Orders.EmployeeID</div>
<div class="cell" style="left:179px;top:160px;width:61px;height:15px;padding-top:0px;background:#e6e6fa;color:#000030">Orders.Freight</div>
<div class="cell" style="left:239px;top:160px;width:61px;height:15px;padding-top:0px;background:#e6e6fa;color:#000030">Orders.OrderDate</div>
<div class="cell" style="left:299px;top:160px;width:62px;height:15px;padding-top:0px;background:#e6e6fa;color:#000030">Orders.OrderID</div>
<div class="cell" style="left:360px;top:160px;width:61px;height:15px;padding-top:0px;background:#e6e6fa;color:#000030">Orders.RequiredDate</div>
<div class="cell" style="left:420px;top:160px;width:61px;height:15px;padding-top:0px;background:#e6e6fa;color:#000030">Orders.ShipCity</div>
<div class="cell" style="left:480px;top:160px;width:62px;height:15px;padding-top:0px;background:#e6e6fa;color:#000030">Orders.ShipCountry</div>
<div class="cell" style="left:58px;top:174px;width:61px;height:16px;padding-top:1px;background:#ffe4e1;color:#000">&quot;&quot;</div>
<div class="cell" style="left:118px;top:174px;width:62px;height:16px;padding-top:1px;background:#ffe4e1;color:#000">Sum(Orders.EmployeeID)</div>
<div class="cell" style="left:179px;top:174px;width:61px;height:16px;padding-top:1px;background:#ffe4e1;color:#000">Sum(Orders.Freight)</div>
<div class="cell" style="left:239px;top:174px;width:61px;height:16px;padding-top:1px;background:#ffe4e1;color:#000">&quot;&quot;</div>
<div class="cell" style="left:299px;top:174px;width:62px;height:16px;padding-top:1px;background:#ffe4e1;color:#000">Sum(Orders.OrderID)</div>
<div class="cell" style="left:360px;top:174px;width:61px;height:16px;padding-top:1px;background:#ffe4e1;color:#000">&quot;&quot;</div>
<div class="cell" style="left:420px;top:174px;width:61px;height:16px;padding-top:1px;background:#ffe4e1;color:#000">&quot;&quot;</div>
<div class="cell" style="left:480px;top:174px;width:62px;height:16px;padding-top:1px;background:#ffe4e1;color:#000">&quot;&quot;</div>
<div style="left:528px;top:145px;width:13px;height:16px;background:#ff0000"></div>
<div style="left:528px;top:161px;width:13px;height:14px;background:#00008b"></div>
<div style="left:528px;top:175px;width:13px;height:15px;background:#ff0000"></div>
<div class="t" style="left:530px;top:178px;font-size:9px;font-weight:bold;color:#fff;transform:rotate(90deg);transform-origin:4px 5px">F</div>
<div style="left:514px;top:147px;width:25px;height:25px;background:#f0f0f0;box-shadow:1px 1px 2px rgba(0,0,0,.35)"></div>
<svg style="left:517px;top:149px" width="20" height="18" viewBox="0 0 20 18"><rect x="1" y="4" width="6" height="3.500" fill="#a89880"/><rect x="1" y="9" width="8" height="3.500" fill="#a89880"/><rect x="1" y="14" width="12" height="3.500" fill="#a89880"/><circle cx="12" cy="6.500" r="5" fill="#1a9a6a"/><path d="M12 3.500v6M9 6.500h6" stroke="#fff" stroke-width="1.600"/></svg>
<div style="left:34px;top:144px;width:15px;height:16px;background:#f0f0f0;border:1px solid #bcbcbc"></div>
<div style="left:34px;top:159px;width:15px;height:15px;background:#f0f0f0;border:1px solid #bcbcbc"></div>
<div style="left:34px;top:173px;width:15px;height:16px;background:#f0f0f0;border:1px solid #bcbcbc"></div>
<div style="left:52px;top:139px;width:5px;height:5px;background:#fff;border:1px solid #000"></div>
<div style="left:298px;top:139px;width:5px;height:5px;background:#fff;border:1px solid #000"></div>
<div style="left:542px;top:139px;width:5px;height:5px;background:#fff;border:1px solid #000"></div>
<div style="left:52px;top:427px;width:5px;height:5px;background:#fff;border:1px solid #000"></div>
<div style="left:542px;top:427px;width:5px;height:5px;background:#fff;border:1px solid #000"></div>
</div>
<!-- RIGHT PANEL -->
<div id="right" class="abs" style="left:1238px;top:147px;width:259px;height:636px;background:#f5f6f7">
<div style="left:0;top:0;width:1px;height:636px;background:#e2e3e5"></div>
<div class="pt" style="left:7px;top:5px;letter-spacing:0">Variablen/Felder</div>
<svg style="left:242px;top:6px" width="11" height="10" viewBox="0 0 11 10"><path d="M1 0.500l9 9M10 0.500l-9 9" stroke="#000" stroke-width="1.900" fill="none"/></svg>
<div style="left:5px;top:21px;width:252px;height:22px;background:#fff;border:1px solid #7a7a7a"></div>
<div class="pt" style="left:11px;top:26px;color:#6d6d78">Variablen/Felder durchsuchen</div>
<svg style="left:244px;top:30px" width="10" height="6" viewBox="0 0 10 6"><path d="M0.500 0.500l4.500 4.500l4.500-4.500" fill="none" stroke="#555" stroke-width="1"/></svg>
<div style="left:5px;top:43px;width:252px;height:600px;background:#fff;border:1px solid #6d7580;border-top:1px solid #7f848c"></div>
<svg style="left:242px;top:49px" width="13" height="13" viewBox="0 0 13 13"><path d="M0 0h13l-5 6v7h-3v-7z" fill="#757575"/></svg>
<div style="left:46px;top:529px;width:135px;height:21px;background:#ffff33"></div>
<div style="left:47px;top:550px;width:134px;height:21px;background:#00ff00"></div>
<svg style="left:0;top:0" width="259" height="636" viewBox="0 0 259 636"><path d="M13.5 53l4 4l4-4" fill="none" stroke="#111" stroke-width="1.600"/><path d="M24 55.5h5" stroke="#808080" stroke-dasharray="1 1"/><path d="M31.5 48.5h11v8h-2.500v5h-8.500z" fill="#fbe192" stroke="#ebc75e"/><path d="M40.5 56.5h3v5h-3z" fill="#fbe192" stroke="#ebc75e"/><text x="36.5" y="58" text-anchor="middle" font-family="Liberation Serif, serif" font-size="10" fill="#555">T</text><path d="M35 68.5l4.500 4.500l-4.500 4.500" fill="none" stroke="#808080" stroke-width="1.500"/><path d="M43 73.5h4" stroke="#808080" stroke-dasharray="1 1"/><path d="M50.5 66.5h11v8h-2.500v5h-8.500z" fill="#fbe192" stroke="#ebc75e"/><path d="M59.5 74.5h3v5h-3z" fill="#fbe192" stroke="#ebc75e"/><path d="M14 86.5l4.500 4.500l-4.500 4.500" fill="none" stroke="#808080" stroke-width="1.500"/><path d="M24 91.5h5" stroke="#808080" stroke-dasharray="1 1"/><path d="M31.5 84.5h11v8h-2.500v5h-8.500z" fill="#fbe192" stroke="#ebc75e"/><path d="M40.5 92.5h3v5h-3z" fill="#fbe192" stroke="#ebc75e"/><rect x="34" y="89" width="6" height="4" fill="#555"/><rect x="35.5" y="87.5" width="3" height="2" fill="none" stroke="#555" stroke-width="0.800"/><rect x="35.5" y="91" width="3" height="1.500" fill="#fbe192"/><path d="M13.5 107l4 4l4-4" fill="none" stroke="#111" stroke-width="1.600"/><path d="M24 109.5h5" stroke="#808080" stroke-dasharray="1 1"/><path d="M31.5 102.5h11v8h-2.500v5h-8.500z" fill="#fbe192" stroke="#ebc75e"/><path d="M40.5 110.5h3v5h-3z" fill="#fbe192" stroke="#ebc75e"/><rect x="34.5" y="105.5" width="5" height="7" fill="#fff" stroke="#555"/><path d="M34.5 107.5h5M34.5 110h5M37 107v5" stroke="#555" stroke-width="0.700"/><path d="M35 122.5l4.500 4.500l-4.500 4.500" fill="none" stroke="#808080" stroke-width="1.500"/><path d="M43 127.5h4" stroke="#808080" stroke-dasharray="1 1"/><path d="M50.5 120.5h11v8h-2.500v5h-8.500z" fill="#fbe192" stroke="#ebc75e"/><path d="M59.5 128.5h3v5h-3z" fill="#fbe192" stroke="#ebc75e"/><path d="M35 140.5l4.500 4.500l-4.500 4.500" fill="none" stroke="#808080" stroke-width="1.500"/><path d="M43 145.5h4" stroke="#808080" stroke-dasharray="1 1"/><path d="M50.5 138.5h11v8h-2.500v5h-8.500z" fill="#fbe192" stroke="#ebc75e"/><path d="M59.5 146.5h3v5h-3z" fill="#fbe192" stroke="#ebc75e"/><path d="M35 158.5l4.500 4.500l-4.500 4.500" fill="none" stroke="#808080" stroke-width="1.500"/><path d="M43 163.5h4" stroke="#808080" stroke-dasharray="1 1"/><path d="M50.5 156.5h11v8h-2.500v5h-8.500z" fill="#fbe192" stroke="#ebc75e"/><path d="M59.5 164.5h3v5h-3z" fill="#fbe192" stroke="#ebc75e"/><path d="M35 176.5l4.500 4.500l-4.500 4.500" fill="none" stroke="#808080" stroke-width="1.500"/><path d="M43 181.5h4" stroke="#808080" stroke-dasharray="1 1"/><path d="M50.5 174.5h11v8h-2.500v5h-8.500z" fill="#fbe192" stroke="#ebc75e"/><path d="M59.5 182.5h3v5h-3z" fill="#fbe192" stroke="#ebc75e"/><path d="M35 194.5l4.500 4.500l-4.500 4.500" fill="none" stroke="#808080" stroke-width="1.500"/><path d="M43 199.5h4" stroke="#808080" stroke-dasharray="1 1"/><path d="M50.5 192.5h11v8h-2.500v5h-8.500z" fill="#fbe192" stroke="#ebc75e"/><path d="M59.5 200.5h3v5h-3z" fill="#fbe192" stroke="#ebc75e"/><path d="M35 212.5l4.500 4.500l-4.500 4.500" fill="none" stroke="#808080" stroke-width="1.500"/><path d="M43 217.5h4" stroke="#808080" stroke-dasharray="1 1"/><path d="M50.5 210.5h11v8h-2.500v5h-8.500z" fill="#fbe192" stroke="#ebc75e"/><path d="M59.5 218.5h3v5h-3z" fill="#fbe192" stroke="#ebc75e"/><path d="M35 230.5l4.500 4.500l-4.500 4.500" fill="none" stroke="#808080" stroke-width="1.500"/><path d="M43 235.5h4" stroke="#808080" stroke-dasharray="1 1"/><path d="M50.5 228.5h11v8h-2.500v5h-8.500z" fill="#fbe192" stroke="#ebc75e"/><path d="M59.5 236.5h3v5h-3z" fill="#fbe192" stroke="#ebc75e"/><path d="M35 248.5l4.500 4.500l-4.500 4.500" fill="none" stroke="#808080" stroke-width="1.500"/><path d="M43 253.5h4" stroke="#808080" stroke-dasharray="1 1"/><path d="M50.5 246.5h11v8h-2.500v5h-8.500z" fill="#fbe192" stroke="#ebc75e"/><path d="M59.5 254.5h3v5h-3z" fill="#fbe192" stroke="#ebc75e"/><path d="M35 266.5l4.500 4.500l-4.500 4.500" fill="none" stroke="#808080" stroke-width="1.500"/><path d="M43 271.5h4" stroke="#808080" stroke-dasharray="1 1"/><path d="M50.5 264.5h11v8h-2.500v5h-8.500z" fill="#fbe192" stroke="#ebc75e"/><path d="M59.5 272.5h3v5h-3z" fill="#fbe192" stroke="#ebc75e"/><path d="M35 284.5l4.500 4.500l-4.500 4.500" fill="none" stroke="#808080" stroke-width="1.500"/><path d="M43 289.5h4" stroke="#808080" stroke-dasharray="1 1"/><path d="M50.5 282.5h11v8h-2.500v5h-8.500z" fill="#fbe192" stroke="#ebc75e"/><path d="M59.5 290.5h3v5h-3z" fill="#fbe192" stroke="#ebc75e"/><path d="M35 302.5l4.500 4.500l-4.500 4.500" fill="none" stroke="#808080" stroke-width="1.500"/><path d="M43 307.5h4" stroke="#808080" stroke-dasharray="1 1"/><path d="M50.5 300.5h11v8h-2.500v5h-8.500z" fill="#fbe192" stroke="#ebc75e"/><path d="M59.5 308.5h3v5h-3z" fill="#fbe192" stroke="#ebc75e"/><path d="M35 320.5l4.500 4.500l-4.500 4.500" fill="none" stroke="#808080" stroke-width="1.500"/><path d="M43 325.5h4" stroke="#808080" stroke-dasharray="1 1"/><path d="M50.5 318.5h11v8h-2.500v5h-8.500z" fill="#fbe192" stroke="#ebc75e"/><path d="M59.5 326.5h3v5h-3z" fill="#fbe192" stroke="#ebc75e"/><path d="M35 338.5l4.500 4.500l-4.500 4.500" fill="none" stroke="#808080" stroke-width="1.500"/><path d="M43 343.5h4" stroke="#808080" stroke-dasharray="1 1"/><path d="M50.5 336.5h11v8h-2.500v5h-8.500z" fill="#fbe192" stroke="#ebc75e"/><path d="M59.5 344.5h3v5h-3z" fill="#fbe192" stroke="#ebc75e"/><path d="M35 356.5l4.500 4.500l-4.500 4.500" fill="none" stroke="#808080" stroke-width="1.500"/><path d="M43 361.5h4" stroke="#808080" stroke-dasharray="1 1"/><path d="M50.5 354.5h11v8h-2.500v5h-8.500z" fill="#fbe192" stroke="#ebc75e"/><path d="M59.5 362.5h3v5h-3z" fill="#fbe192" stroke="#ebc75e"/><path d="M35 374.5l4.500 4.500l-4.500 4.500" fill="none" stroke="#808080" stroke-width="1.500"/><path d="M43 379.5h4" stroke="#808080" stroke-dasharray="1 1"/><path d="M50.5 372.5h11v8h-2.500v5h-8.500z" fill="#fbe192" stroke="#ebc75e"/><path d="M59.5 380.5h3v5h-3z" fill="#fbe192" stroke="#ebc75e"/><path d="M35 392.5l4.500 4.500l-4.500 4.500" fill="none" stroke="#808080" stroke-width="1.500"/><path d="M43 397.5h4" stroke="#808080" stroke-dasharray="1 1"/><path d="M50.5 390.5h11v8h-2.500v5h-8.500z" fill="#fbe192" stroke="#ebc75e"/><path d="M59.5 398.5h3v5h-3z" fill="#fbe192" stroke="#ebc75e"/><path d="M35 410.5l4.500 4.500l-4.500 4.500" fill="none" stroke="#808080" stroke-width="1.500"/><path d="M43 415.5h4" stroke="#808080" stroke-dasharray="1 1"/><path d="M50.5 408.5h11v8h-2.500v5h-8.500z" fill="#fbe192" stroke="#ebc75e"/><path d="M59.5 416.5h3v5h-3z" fill="#fbe192" stroke="#ebc75e"/><path d="M35 428.5l4.500 4.500l-4.500 4.500" fill="none" stroke="#808080" stroke-width="1.500"/><path d="M43 433.5h4" stroke="#808080" stroke-dasharray="1 1"/><path d="M50.5 426.5h11v8h-2.500v5h-8.500z" fill="#fbe192" stroke="#ebc75e"/><path d="M59.5 434.5h3v5h-3z" fill="#fbe192" stroke="#ebc75e"/><path d="M35 446.5l4.500 4.500l-4.500 4.500" fill="none" stroke="#808080" stroke-width="1.500"/><path d="M43 451.5h4" stroke="#808080" stroke-dasharray="1 1"/><path d="M50.5 444.5h11v8h-2.500v5h-8.500z" fill="#fbe192" stroke="#ebc75e"/><path d="M59.5 452.5h3v5h-3z" fill="#fbe192" stroke="#ebc75e"/><path d="M35 464.5l4.500 4.500l-4.500 4.500" fill="none" stroke="#808080" stroke-width="1.500"/><path d="M43 469.5h4" stroke="#808080" stroke-dasharray="1 1"/><path d="M50.5 462.5h11v8h-2.500v5h-8.500z" fill="#fbe192" stroke="#ebc75e"/><path d="M59.5 470.5h3v5h-3z" fill="#fbe192" stroke="#ebc75e"/><path d="M35 482.5l4.500 4.500l-4.500 4.500" fill="none" stroke="#808080" stroke-width="1.500"/><path d="M43 487.5h4" stroke="#808080" stroke-dasharray="1 1"/><path d="M50.5 480.5h11v8h-2.500v5h-8.500z" fill="#fbe192" stroke="#ebc75e"/><path d="M59.5 488.5h3v5h-3z" fill="#fbe192" stroke="#ebc75e"/><path d="M18 505.5h11" stroke="#808080" stroke-dasharray="1 1"/><path d="M31.5 498.5h11v8h-2.500v5h-8.500z" fill="#fbe192" stroke="#ebc75e"/><path d="M40.5 506.5h3v5h-3z" fill="#fbe192" stroke="#ebc75e"/><text x="36.5" y="508.5" text-anchor="middle" font-family="DejaVu Sans, sans-serif" font-size="9" fill="#555">Σ</text><path d="M13.5 521l4 4l4-4" fill="none" stroke="#111" stroke-width="1.600"/><path d="M24 523.5h5" stroke="#808080" stroke-dasharray="1 1"/><path d="M31.5 516.5h11v8h-2.500v5h-8.500z" fill="#fbe192" stroke="#ebc75e"/><path d="M40.5 524.5h3v5h-3z" fill="#fbe192" stroke="#ebc75e"/><rect x="34.5" y="520.5" width="4" height="5" fill="#fff" stroke="#555" stroke-width="0.900"/><path d="M36.5 518.5h4v5" fill="none" stroke="#555" stroke-width="0.900"/><path d="M35 536.5l4.500 4.500l-4.500 4.500" fill="none" stroke="#808080" stroke-width="1.500"/><path d="M43 541.5h4" stroke="#808080" stroke-dasharray="1 1"/><path d="M51.5 534.5h6l3.500 3.500v9.500h-9.500z" fill="#ffff66" stroke="#6a7a30"/><path d="M54 541.5h5M54 544.5h5M55.5 540v6M57.5 540v6" stroke="#4a7a30" stroke-width="0.900"/><path d="M35 554.5l4.500 4.500l-4.500 4.500" fill="none" stroke="#808080" stroke-width="1.500"/><path d="M43 559.5h4" stroke="#808080" stroke-dasharray="1 1"/><rect x="49.5" y="552.5" width="13" height="13" fill="#00ff00" stroke="#1a5a1a"/><path d="M18 577.5h11" stroke="#808080" stroke-dasharray="1 1"/><path d="M31.5 570.5h11v8h-2.500v5h-8.500z" fill="#fbe192" stroke="#ebc75e"/><path d="M40.5 578.5h3v5h-3z" fill="#fbe192" stroke="#ebc75e"/><circle cx="37" cy="575" r="1.600" fill="#555"/><path d="M34 580c0-4 6-4 6 0z" fill="#555"/><path d="M18.5 63V85" stroke="#808080" stroke-dasharray="1 1"/><path d="M18.5 101V103" stroke="#808080" stroke-dasharray="1 1"/><path d="M18.5 117V505" stroke="#808080" stroke-dasharray="1 1"/><path d="M18.5 531V577" stroke="#808080" stroke-dasharray="1 1"/><path d="M37.5 63V65" stroke="#808080" stroke-dasharray="1 1"/><path d="M37.5 117V119" stroke="#808080" stroke-dasharray="1 1"/><path d="M37.5 531V533" stroke="#808080" stroke-dasharray="1 1"/></svg>
<div class="pt" style="left:50px;top:49px">Variablen</div>
<div class="pt" style="left:69px;top:67px">LL</div>
<div class="pt" style="left:50px;top:85px">Versandvariablen</div>
<div class="pt" style="left:50px;top:103px">Felder</div>
<div class="pt" style="left:69px;top:121px">LL</div>
<div class="pt" style="left:69px;top:139px">Budget</div>
<div class="pt" style="left:69px;top:157px">BusinessActivityTime</div>
<div class="pt" style="left:69px;top:175px">Categories</div>
<div class="pt" style="left:69px;top:193px">ClimateData</div>
<div class="pt" style="left:69px;top:211px">Customers</div>
<div class="pt" style="left:69px;top:229px">Employees</div>
<div class="pt" style="left:69px;top:247px">EmployeeTerritories</div>
<div class="pt" style="left:69px;top:265px">Keyword</div>
<div class="pt" style="left:69px;top:283px">Order_Details</div>
<div class="pt" style="left:69px;top:301px">Orders</div>
<div class="pt" style="left:69px;top:319px">Pollen</div>
<div class="pt" style="left:69px;top:337px">Products</div>
<div class="pt" style="left:69px;top:355px">Project</div>
<div class="pt" style="left:69px;top:373px">Regions</div>
<div class="pt" style="left:69px;top:391px">Sales</div>
<div class="pt" style="left:69px;top:409px">SalesStages</div>
<div class="pt" style="left:69px;top:427px">Shippers</div>
<div class="pt" style="left:69px;top:445px">Suppliers</div>
<div class="pt" style="left:69px;top:463px">Territories</div>
<div class="pt" style="left:69px;top:481px">Venue</div>
<div class="pt" style="left:50px;top:499px">Summenvariablen</div>
<div class="pt" style="left:50px;top:517px">Berichtsparameter</div>
<div class="pt" style="left:69px;top:535px">@MitarbeiterDetails</div>
<div class="pt" style="left:52px;top:554px;font-size:12px;color:#0a3a0a">A</div>
<div class="pt" style="left:69px;top:553px">@Mitarbeitername</div>
<div class="pt" style="left:50px;top:571px">Benutzervariablen</div>
</div>
<!-- ARROWS -->
<svg style="left:0;top:0;pointer-events:none" width="1497" height="783" viewBox="0 0 1497 783">
  <defs><marker id="ah" viewBox="0 0 11 9" refX="10.500" refY="4.500" markerWidth="11" markerHeight="9" markerUnits="userSpaceOnUse" orient="auto-start-reverse"><path d="M0 0L11 4.500L0 9z" fill="#ff2a35"/></marker></defs>
  <path d="M148 296L306 691" stroke="#ff2a35" stroke-width="1.800" fill="none" marker-end="url(#ah)"/>
  <path d="M897 244L1282.500 706" stroke="#ff2a35" stroke-width="1.800" fill="none" marker-start="url(#ah)" marker-end="url(#ah)"/>
</svg>
<!-- WINDOW BORDER -->
<div style="position:absolute;left:1489px;top:0;width:8px;height:8px;background:radial-gradient(circle at 0 100%,rgba(238,238,238,0) 7px,#eeeeee 8px)"></div>
<div style="position:absolute;left:0;top:0;width:1px;height:783px;background:#0078d5"></div>
<div style="position:absolute;left:1496px;top:0;width:1px;height:783px;background:#0078d5"></div>
</body>
</html>
